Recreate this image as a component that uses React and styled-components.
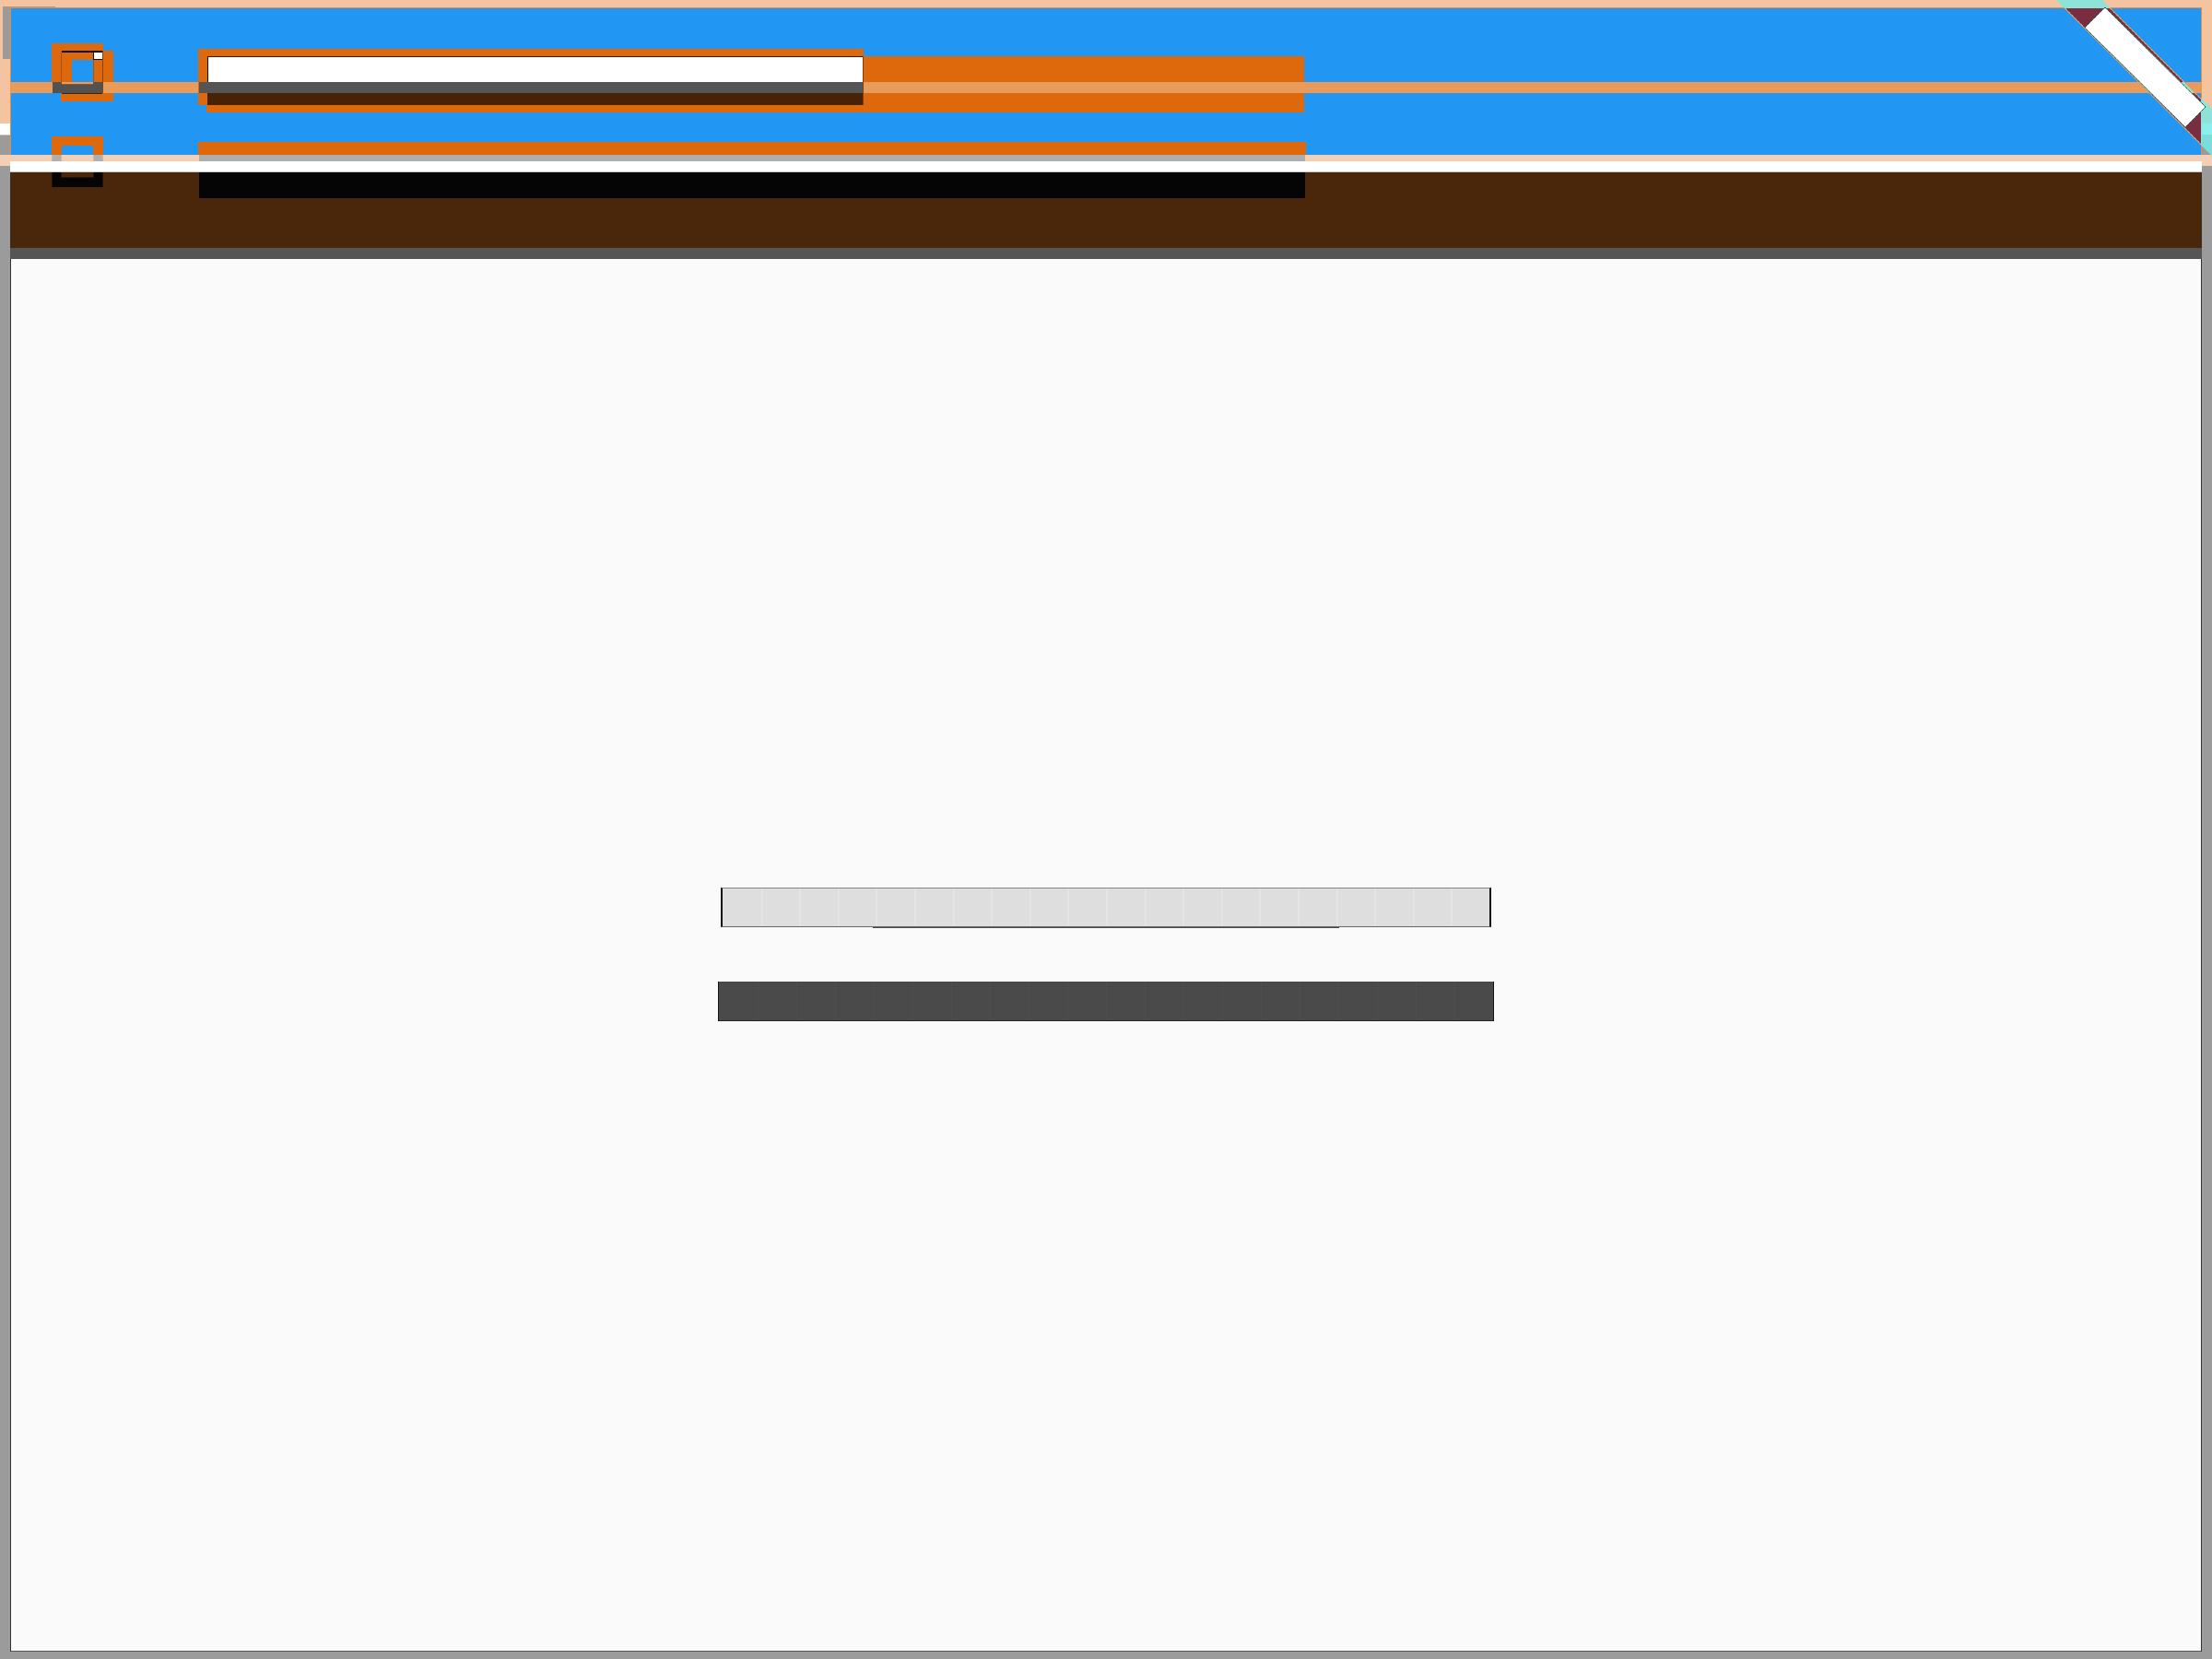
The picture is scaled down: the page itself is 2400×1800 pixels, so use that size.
import React from "react";
import styled, { createGlobalStyle } from "styled-components";

const c = {
  blue: "#2196f3",
  orange: "#de690c",
  stripe: "#e99b5b",
  edge: "#e48b45",
  peach: "#f4c4a1",
  blush: "#f5cfb3",
  brown: "#4a260a",
  umber: "#472206",
  slate: "#555555",
  gray: "#9b9b9b",
  silver: "#aeaeae",
  ink: "#050505",
  paper: "#fafafa",
};

const GlobalStyle = createGlobalStyle`
  * { box-sizing: border-box; }
  body { margin: 0; background: ${c.gray}; font-family: "Liberation Sans", sans-serif; }
`;

const Page = styled.div`
  position: relative;
  display: grid;
  grid-template-columns: 11px minmax(0, 1fr) 11px;
  min-height: 100vh;
  overflow: hidden;
`;

const Rail = styled.div`
  display: flex;
  flex-direction: column;
`;

const Band = styled.div`
  flex: none;
  height: ${(p) => p.$h}px;
  background: ${(p) => p.$color};
  border: 0 solid ${(p) => p.$line || "transparent"};
  border-width: ${(p) => p.$lines || "0"};
`;

const CornerShadow = styled.div`
  position: absolute;
  top: 7px;
  left: 3px;
  width: 57px;
  height: 57px;
  border-left: 8px solid ${c.gray};
  border-top: 1px solid #b99778;
`;

const Column = styled.div`
  display: flex;
  flex-direction: column;
  padding-bottom: 8px;
`;

const Stack = styled.div`
  display: grid;
  grid-template-columns: minmax(0, 1fr);
  align-items: start;
  > * { grid-area: 1 / 1; }
`;

const Header = styled(Stack).attrs({ as: "header" })``;

const Bands = styled.div`
  display: flex;
  flex-direction: column;
`;

const Toolbar = styled.div`
  display: flex;
  gap: 92px;
  padding: 47px 0 0 45px;
`;

const Icons = styled.div`
  display: flex;
  flex-direction: column;
  gap: 38px;
  width: 67px;
  svg { display: block; }
`;

const Bars = styled.div`
  display: flex;
  flex-direction: column;
  gap: 32px;
  padding-top: 6px;
`;

const BackPlate = styled.div`
  width: calc(30vw + 2px);
  height: 61px;
  background: ${c.orange};
`;

const FrontPlate = styled.div`
  width: calc(50vw - 9px);
  height: 61px;
  margin: 8px 0 0 9px;
  padding-top: 28px;
  background: ${c.orange};
`;

const PlateStripe = styled.div`
  height: 12px;
  background: ${c.stripe};
`;

const Field = styled.div`
  width: calc(30vw - 8px);
  height: 53px;
  margin: 8px 0 0 10px;
  background: ${c.umber};
  border-right: 1px solid #83400a;
`;

const FieldFace = styled.div`
  height: 28px;
  background: #ffffff;
  border-top: 1px solid #351704;
  border-left: 1px solid #160a02;
`;

const FieldStripe = styled.div`
  width: 30vw;
  height: 12px;
  margin: 36px 0 0 1px;
  background: ${c.slate};
`;

const LowerBar = styled.div`
  display: flex;
  flex-direction: column;
  width: calc(50vw + 2px);
`;

const LowerInset = styled.div`
  display: flex;
  flex-direction: column;
  gap: 12px;
  padding: 0 1px;
`;

const Main = styled.main`
  flex: 1;
  display: flex;
  flex-direction: column;
  align-items: center;
  justify-content: center;
  gap: 58px;
  padding-bottom: 1px;
  background: ${c.paper};
  border: 1px solid #333333;
  border-top: 0;
  border-bottom-color: ${c.slate};
`;

const LightTrack = styled.div`
  width: calc(35vw - 4px);
`;

const LightCells = styled.div`
  display: flex;
  height: 43px;
  background: #dedede;
  border: 1px solid #858585;
  border-width: 1px 2px;
  border-left-color: #0c0c0c;
  border-right-color: #0c0c0c;
  border-bottom-color: #666666;
`;

const Underline = styled.div`
  width: calc(21vw + 2px);
  height: 1px;
  margin: 0 auto;
  background: #484848;
`;

const DarkTrack = styled.div`
  display: flex;
  width: calc(35vw + 2px);
  height: 43px;
  background: #4a4a4a;
  border: 0 solid #111111;
  border-width: 0 1px 1px;
  border-bottom-color: #222222;
`;

const Cell = styled.span`
  flex: 1;
  border-left: ${(p) => (p.$dark ? 1 : 2)}px solid ${(p) => (p.$dark ? "#4e4e4e" : "#e4e4e4")};
  &:first-child { border-left-color: transparent; }
`;

const RibbonSvg = styled.svg`
  position: absolute;
  top: 0;
  right: 0;
`;

const cells = Array.from({ length: 20 }, (_, i) => i);

function SideRail() {
  return (
    <Rail>
      <Band $h={134} $color={c.peach} />
      <Band $h={12} $color="#ffffff" />
      <Band $h={22} $color={c.gray} $line="#c4c4c4" $lines="1px 0 0" />
      <Band $h={12} $color={c.blush} />
    </Rail>
  );
}

function StackedSquares() {
  return (
    <svg width="67" height="63" shapeRendering="crispEdges" aria-hidden="true">
      <path fill={c.orange} d="M0 0H56V8H67V63H10V54H0Z" />
      <path fill={c.blue} d="M22 18H45V42H22Z" />
      <path fill={c.stripe} d="M0 42H67V54H0Z" />
      <path fill="#525252" d="M1 42H11V45H45V42H55V54H1Z" />
      <path fill="#a75413" d="M10 10H11V42H10ZM45 18H46V42H45ZM11 44H45V45H11Z" />
      <path fill="#8b430a" d="M55 8H56V54H55Z" />
      <path fill="#0b0502" d="M11 8H55V10H11Z" />
      <path fill="#ffffff" d="M46 10H55V17H46Z" />
      <path fill="#160a02" d="M45 10H46V18H45ZM46 17H55V18H46Z" />
      <path fill="#472206" d="M11 54H55V55H11Z" />
    </svg>
  );
}

function SplitSquare() {
  return (
    <svg width="56" height="55" shapeRendering="crispEdges" aria-hidden="true">
      <path fill={c.orange} d="M0 0H56V20H45V10H11V20H0Z" />
      <path fill={c.silver} d="M1 20H10V27H1ZM46 20H55V27H46Z" />
      <path fill="#cbb7a8" d="M0 20H1V27H0ZM10 20H11V27H10ZM45 20H46V27H45ZM55 20H56V27H55Z" />
      <path fill="#271405" d="M0 39H11V44H45V39H56V55H0Z" />
      <path fill={c.ink} d="M1 39H10V45H46V39H55V55H1Z" />
    </svg>
  );
}

function Ribbon() {
  return (
    <RibbonSvg width="180" height="180" viewBox="0 0 180 180" aria-hidden="true">
      <path fill="#8de3d8" d="M11 0H61L70 9H20Z" />
      <path fill="#8de3d8" d="M168 106L180 118V169L168 157Z" />
      <path fill="#8befec" d="M169 134H180V146H169Z" />
      <path fill="#79ddda" d="M169 146H180V169L169 158Z" />
      <path fill="#7a2d40" d="M20 9H70L168 107V157Z" />
      <path fill="#8de3d8" d="M100 89H150L162 101H112Z" />
      <path fill="none" stroke="#e99b5b" strokeWidth="1" d="M20 9L168 157M70 9L168 107" />
      <path fill="none" stroke="#b9cfae" strokeWidth="1" strokeDasharray="1 1" d="M21 9L168 156M69 9L168 108" />
      <path fill="#ffffff" d="M64 8L173 116L151 138L42 30Z" />
      <path fill="none" stroke="#75bba5" strokeWidth="1" d="M64 8L173 116L151 138L42 30Z" />
      <path fill="none" stroke="#102020" strokeWidth="1" strokeDasharray="1 1" d="M64 8L173 116L151 138L42 30Z" />
    </RibbonSvg>
  );
}

export default function App() {
  return (
    <>
      <GlobalStyle />
      <Page>
        <SideRail />
        <Column>
          <Header>
            <Bands>
              <Band $h={8} $color={c.peach} />
              <Band $h={81} $color={c.blue} $line={c.edge} $lines="1px 1px 0" />
              <Band $h={12} $color={c.stripe} />
              <Band $h={67} $color={c.blue} $line={c.edge} $lines="0 1px" />
              <Band $h={7} $color={c.blush} />
              <Band $h={12} $color="#ffffff" $line="#c8c8c8" $lines="0 0 1px" />
              <Band $h={82} $color={c.brown} $line="#392d24" $lines="0 1px" />
              <Band $h={12} $color={c.slate} />
            </Bands>
            <Toolbar>
              <Icons>
                <StackedSquares />
                <SplitSquare />
              </Icons>
              <Bars>
                <Stack>
                  <BackPlate />
                  <FrontPlate>
                    <PlateStripe />
                  </FrontPlate>
                  <Field>
                    <FieldFace />
                  </Field>
                  <FieldStripe />
                </Stack>
                <LowerBar>
                  <Band $h={14} $color={c.orange} />
                  <LowerInset>
                    <Band $h={7} $color={c.silver} />
                    <Band $h={28} $color={c.ink} />
                  </LowerInset>
                </LowerBar>
              </Bars>
            </Toolbar>
          </Header>
          <Main>
            <LightTrack>
              <LightCells>
                {cells.map((i) => (
                  <Cell key={i} />
                ))}
              </LightCells>
              <Underline />
            </LightTrack>
            <DarkTrack>
              {cells.map((i) => (
                <Cell key={i} $dark />
              ))}
            </DarkTrack>
          </Main>
        </Column>
        <SideRail />
        <CornerShadow />
        <Ribbon />
      </Page>
    </>
  );
}
